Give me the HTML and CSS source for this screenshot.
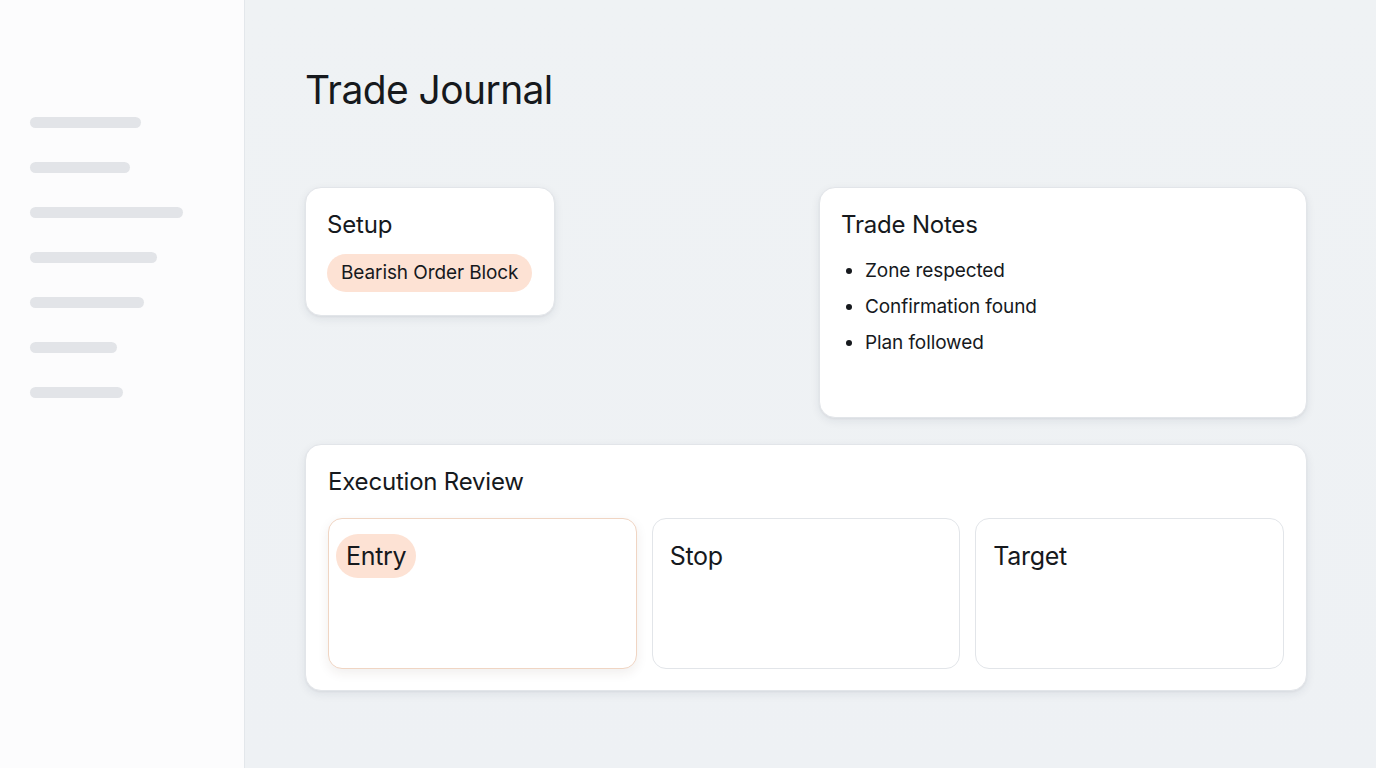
FILE: index.html
```html
<!DOCTYPE html>
<html lang="en">
<head>
<meta charset="utf-8">
<title>Trade Journal</title>
<link rel="stylesheet" href="styles.css">
</head>
<body>
<div class="app">
  <aside class="sidebar">
    <span class="nav-bar w1"></span>
    <span class="nav-bar w2"></span>
    <span class="nav-bar w3"></span>
    <span class="nav-bar w4"></span>
    <span class="nav-bar w5"></span>
    <span class="nav-bar w6"></span>
    <span class="nav-bar w7"></span>
  </aside>
  <main class="main">
    <h1 class="page-title">Trade Journal</h1>
    <div class="top-row">
      <section class="card setup-card">
        <h2 class="card-title">Setup</h2>
        <span class="pill">Bearish Order Block</span>
      </section>
      <section class="card notes-card">
        <h2 class="card-title">Trade Notes</h2>
        <ul class="notes">
          <li>Zone respected</li>
          <li>Confirmation found</li>
          <li>Plan followed</li>
        </ul>
      </section>
    </div>
    <section class="card review-card">
      <h2 class="card-title">Execution Review</h2>
      <div class="review-grid">
        <div class="sub-card active"><span class="sub-label pill-label">Entry</span></div>
        <div class="sub-card"><span class="sub-label">Stop</span></div>
        <div class="sub-card"><span class="sub-label">Target</span></div>
      </div>
    </section>
  </main>
</div>
</body>
</html>
```

FILE: styles.css
```css
* { box-sizing: border-box; }
html, body { margin: 0; padding: 0; }
body {
  font-family: "Inter", "Liberation Sans", sans-serif;
  color: #16191d;
  background: #eef1f4;
  width: 1376px;
  height: 768px;
  overflow: hidden;
}
.app {
  display: flex;
  height: 768px;
}
.sidebar {
  width: 245px;
  flex: none;
  background: #fcfcfd;
  border-right: 1px solid #e3e7eb;
  padding: 117px 0 0 30px;
  display: flex;
  flex-direction: column;
  gap: 34px;
}
.nav-bar {
  display: block;
  height: 11px;
  border-radius: 6px;
  background: #e2e4e8;
}
.w1 { width: 111px; }
.w2 { width: 100px; }
.w3 { width: 153px; }
.w4 { width: 127px; }
.w5 { width: 114px; }
.w6 { width: 87px; }
.w7 { width: 93px; }

.main {
  flex: 1;
  padding: 66px 69px 0 60px;
  background: linear-gradient(180deg, #eff2f4 0%, #eef1f4 100%);
}
.page-title {
  margin: 0 0 73px 0;
  font-size: 39px;
  line-height: 48px;
  font-weight: 400;
  letter-spacing: -0.6px;
  color: #16191d;
}
.top-row {
  display: flex;
  justify-content: space-between;
  align-items: flex-start;
}
.card {
  background: #fff;
  border: 1px solid #e2e5e9;
  border-radius: 16px;
  box-shadow: 0 3px 10px rgba(30, 40, 60, 0.08), 0 1px 2px rgba(30, 40, 60, 0.05);
}
.card-title {
  margin: 0;
  font-size: 24px;
  line-height: 30px;
  font-weight: 400;
  letter-spacing: -0.2px;
}
.setup-card {
  width: 250px;
  height: 129px;
  padding: 22px 21px 0 21px;
}
.pill {
  display: inline-block;
  margin-top: 14px;
  height: 38px;
  line-height: 38px;
  padding: 0 14px;
  border-radius: 19px;
  background: #fde2d4;
  font-size: 19px;
  letter-spacing: -0.1px;
}
.notes-card {
  width: 488px;
  height: 231px;
  padding: 22px 21px 0 21px;
}
.notes {
  margin: 13px 0 0 0;
  padding: 0 0 0 24px;
  font-size: 19px;
  line-height: 36px;
  letter-spacing: -0.1px;
}
.notes li {
  height: 36px;
}

.review-card {
  margin-top: 26px;
  width: 1002px;
  padding: 22px 22px 21px 22px;
}
.review-grid {
  margin-top: 21px;
  display: grid;
  grid-template-columns: repeat(3, 1fr);
  gap: 15px;
}
.sub-card {
  height: 151px;
  border: 1px solid #e2e5e9;
  border-radius: 14px;
  padding: 15px 17px;
  background: #fff;
}
.sub-card.active {
  border-color: #f0d5c3;
  box-shadow: 0 4px 12px rgba(60, 40, 30, 0.08);
}
.sub-label {
  display: inline-block;
  font-size: 25px;
  line-height: 44px;
  letter-spacing: -0.3px;
}
.pill-label {
  margin-left: -10px;
  padding: 0 10px;
  border-radius: 22px;
  background: #fde2d4;
}
```
